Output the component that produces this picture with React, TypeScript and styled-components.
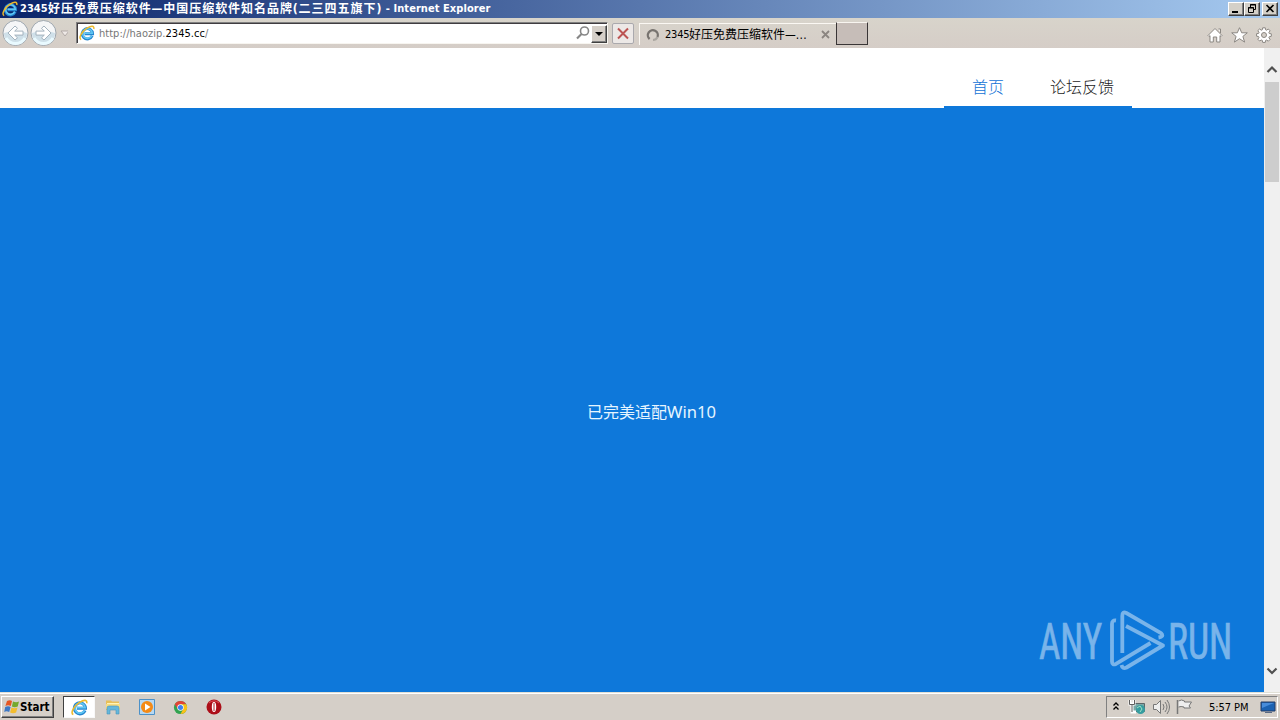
import React from "react";
import styled, { createGlobalStyle, css } from "styled-components";

const GlobalStyle = createGlobalStyle`
  * { box-sizing: border-box; }
  body {
    margin: 0;
    overflow: hidden;
    font-family: "DejaVu Sans Condensed", "DejaVu Sans", "Noto Sans CJK SC", sans-serif;
    font-stretch: condensed;
  }
  svg { display: block; flex: none; }
`;

const Desktop = styled.div`
  width: 1280px;
  height: 720px;
  display: flex;
  flex-direction: column;
  overflow: hidden;
  background: #d5cfc8;
`;

const TitleBar = styled.header`
  height: 18px;
  display: flex;
  align-items: center;
  padding: 0 2px;
  background: linear-gradient(90deg, #0a246a, #a6caf0);
`;

const Title = styled.div`
  display: flex;
  flex: 1;
  align-items: center;
  margin-left: 2px;
  color: #fff;
  font-weight: bold;
  line-height: 18px;
`;

const Run = styled.span<{ $size: number; $gap?: number; $width?: number }>`
  font-size: ${(p) => p.$size}px;
  letter-spacing: ${(p) => p.$gap || 0}px;
  ${(p) => p.$width && css`width: ${p.$width}px;`}
  white-space: pre;
`;

const raised = css`
  border: 1px solid;
  border-color: #fff #404040 #404040 #fff;
  box-shadow: inset -1px -1px 0 #808080;
`;

const WindowButton = styled.button<{ $gap?: number }>`
  width: 16px;
  height: 14px;
  padding: 0;
  margin-left: ${(p) => p.$gap || 0}px;
  background: #d4d0c8;
  ${raised}
`;

const Toolbar = styled.div`
  height: 30px;
  display: flex;
  align-items: flex-start;
  padding-left: 2px;
  background: linear-gradient(#d8d4cb, #d5cdc7);
`;

const AddressBox = styled.div`
  width: 532px;
  height: 22px;
  margin: 4px 0 0 8px;
  display: flex;
  align-items: center;
  padding-left: 2px;
  background: #fff;
  border: 1px solid;
  border-color: #808080 #f7f5f0 #f7f5f0 #808080;
  box-shadow: inset 1px 1px 0 #403c40;
`;

const Url = styled.div`
  flex: 1;
  display: flex;
  margin-left: 4px;
  padding-top: 2px;
  color: #777;
  line-height: 18px;
  b {
    color: #000;
    font-weight: normal;
  }
`;

const DropButton = styled.button`
  width: 16px;
  height: 18px;
  margin: 1px 0 0 1px;
  padding: 0;
  background: #d5cfc8;
  ${raised}
`;

const StopButton = styled.button`
  width: 22px;
  height: 21px;
  margin: 5px 0 0 4px;
  padding: 0 0 0 3px;
  background: #ece8e6;
  border: 1px solid #aaa9ad;
  border-radius: 2px;
`;

const Tab = styled.div`
  width: 197px;
  height: 22px;
  margin: 5px 0 0 5px;
  display: flex;
  align-items: center;
  padding-left: 6px;
  line-height: 20px;
  border-top: 1px solid #fbf8f3;
  border-left: 1px solid #fbf8f3;
`;

const TabTitle = styled.div`
  display: flex;
  align-items: center;
  width: 156px;
  margin-left: 5px;
`;

const NewTab = styled.div`
  width: 32px;
  height: 23px;
  margin-top: 4px;
  background: #c6bdb8;
  border: 1px solid;
  border-color: #f8f5f0 #393536 #393536 #393536;
`;

const ToolIcons = styled.div`
  display: flex;
  gap: 8px;
  margin: 9px 8px 0 auto;
`;

const Viewport = styled.div`
  height: 644px;
  display: flex;
`;

const Page = styled.main`
  width: 1264px;
  display: flex;
  flex-direction: column;
`;

const SiteHeader = styled.div`
  height: 60px;
  padding-right: 132px;
  display: flex;
  justify-content: flex-end;
  background: #fff;
`;

const Nav = styled.nav`
  width: 188px;
  display: flex;
  align-items: center;
  padding: 17px 0 0 28px;
  gap: 46px;
  border-bottom: 2px solid #0e78da;
`;

const NavLink = styled.a<{ $active?: boolean }>`
  color: ${(p) => (p.$active ? "#1272d6" : "#1c1c1c")};
  font-family: "Noto Sans CJK SC", sans-serif;
  font-size: 16px;
  line-height: 20px;
  font-weight: 300;
`;

const Banner = styled.section`
  flex: 1;
  display: flex;
  flex-direction: column;
  align-items: center;
  justify-content: space-between;
  padding: 291px 0 19px 39px;
  background: #0e78da;
`;

const Slogan = styled.div`
  display: flex;
  align-items: center;
  height: 24px;
  color: #e6f5ff;
  font-family: "Noto Sans", "Noto Sans CJK SC", sans-serif;
`;

const Watermark = styled.div`
  align-self: flex-end;
  margin-right: 31px;
`;

const ScrollBar = styled.div`
  width: 16px;
  display: flex;
  flex-direction: column;
  align-items: center;
  padding: 17px 0 16px;
  background: #f0f0f0;
`;

const Thumb = styled.div`
  width: 14px;
  height: 100px;
  margin: 7px 0 auto;
  background: #cdcdcd;
`;

const TaskBar = styled.footer`
  height: 28px;
  display: flex;
  align-items: flex-start;
  padding: 3px 2px 0 1px;
  border-top: 1px solid #e1e0d6;
  box-shadow: inset 0 1px 0 #fff;
  background: #d5cfc8;
`;

const StartButton = styled.button`
  width: 53px;
  height: 22px;
  display: flex;
  align-items: center;
  gap: 0;
  padding: 0 0 0 2px;
  color: #000;
  background: #d5cfc8;
  font-family: inherit;
  font-stretch: condensed;
  font-weight: bold;
  ${raised}
`;

const ActiveTask = styled.div`
  width: 32px;
  height: 22px;
  margin: 0 10px 0 9px;
  display: flex;
  justify-content: center;
  align-items: center;
  background: #fff;
  border: 1px solid;
  border-color: #404040 #f8f8f8 #f8f8f8 #404040;
`;

const Launchers = styled.div`
  height: 22px;
  display: flex;
  align-items: center;
  gap: 18px;
`;

const Tray = styled.div`
  width: 172px;
  height: 22px;
  margin-left: auto;
  display: flex;
  align-items: center;
  padding-left: 5px;
  border: 1px solid;
  border-color: #808080 #fff #fff #808080;
`;

const Clock = styled.div`
  width: 52px;
  margin-left: 15px;
  display: flex;
`;

function IeIcon({ size = 16 }: { size?: number }) {
  return (
    <svg width={size} height={size} viewBox="0 0 16 16" fill="none">
      <path d="M13.2 10.8A5.2 5.2 0 1 1 13.6 8.7H5.5" stroke="#2585cf" strokeWidth="2.9" />
      <path d="M12.8 10.7A4.8 4.8 0 1 1 13.3 8.2H5.5" stroke="#5fc6f3" strokeWidth="1.6" />
      <path d="M2.2 14.6C-1 13.5 2.6 6.5 8 3.2C12.5.4 15.4.6 14.8 4" stroke="#edb92c" strokeWidth="1.5" />
    </svg>
  );
}

function NavArrow({ back }: { back?: boolean }) {
  return (
    <svg width="28" height="30" viewBox="0 0 28 30">
      <circle cx="13.5" cy="15" r="12.5" fill="#f5f6f7" stroke="#9da6ae" />
      <path d="M2 15a11.5 11.5 0 0 0 23 0q-11-4-23 0" fill="#cfe0e9" />
      <path d="M4 20a11 11 0 0 0 19 0" fill="none" stroke="#e9faff" strokeWidth="3" />
      <path
        d={back ? "M6 15l7-7 2.5 2.3-2.8 2.8H21v4h-8.3l2.8 2.7L13 22z" : "M21 15l-7-7-2.5 2.3 2.8 2.8H6v4h8.3l-2.8 2.7L14 22z"}
        fill="#fff"
        stroke="#a4b3be"
      />
    </svg>
  );
}

function AnyRunLogo() {
  return (
    <svg width="196" height="66" viewBox="0 0 196 66" opacity=".6">
      <g fill="#c0dcf5" stroke="#c0dcf5" strokeWidth=".7" fontFamily="Roboto, sans-serif" fontSize="50.5">
        <text transform="translate(2 52) scale(.58 1)" textLength="109" lengthAdjust="spacingAndGlyphs">ANY</text>
        <text transform="translate(131 52) scale(.58 1)" textLength="111" lengthAdjust="spacingAndGlyphs">RUN</text>
      </g>
      <g fill="none" stroke="#c0dcf5" strokeWidth="3.8" strokeLinejoin="round">
        <path d="M79 13.5Q75 13 75 17v37.5q0 4 4 2.4L113.5 36" />
        <path d="M85.3 46V9q0-5 4-3L124 26.2q3.5 3.5-2.5 4.3" />
        <path d="M89 19l37 19.5L89.5 60.5q-4 2-5-2.5" />
      </g>
    </svg>
  );
}

function Chevron({ down }: { down?: boolean }) {
  return (
    <svg width="12" height="10" viewBox="0 0 12 10" fill="none">
      <path d={down ? "M1.5 2.5L6 7l4.5-4.5" : "M1.5 7L6 2.5 10.5 7"} stroke="#505050" strokeWidth="2.2" />
    </svg>
  );
}

function BrowserToolbar() {
  return (
    <Toolbar>
      <NavArrow back />
      <NavArrow />
      <svg width="10" height="30" viewBox="0 0 10 30">
        <path d="M3 13h8l-4 5z" fill="#eee9e6" stroke="#b2aaa7" />
      </svg>
      <AddressBox>
        <IeIcon />
        <Url>
          <Run $size={11} $gap={0.03}>http://haozip.<b>2345.cc</b>/</Run>
        </Url>
        <svg width="14" height="16" viewBox="0 0 14 16" fill="none" stroke="#868686">
          <circle cx="8.5" cy="6" r="4" strokeWidth="1.6" />
          <path d="M5.5 9L1 13.5" strokeWidth="2.2" />
        </svg>
        <DropButton>
          <svg width="14" height="14" viewBox="0 0 14 14"><path d="M3 5h8L7 9z" /></svg>
        </DropButton>
      </AddressBox>
      <StopButton>
        <svg width="14" height="17" viewBox="0 0 14 17">
          <path d="M2 3.5l10 10M12 3.5l-10 10" stroke="#bc5453" strokeWidth="2" />
        </svg>
      </StopButton>
      <Tab>
        <svg width="14" height="14" viewBox="0 0 14 14" fill="none">
          <path d="M3.6 11A5 5 0 1 1 11.5 9" stroke="#77736f" strokeWidth="2.3" />
          <path d="M11.5 9A5 5 0 0 1 7 12" stroke="#aaa6a0" strokeWidth="2" />
        </svg>
        <TabTitle>
          <Run $size={11} $width={24} $gap={-0.2}>2345</Run>
          <Run $size={12}>好压免费压缩软件—</Run>
          <Run $size={12} $gap={0.3}>...</Run>
        </TabTitle>
        <svg width="9" height="9" viewBox="0 0 9 9"><path d="M1 1l7 7M8 1L1 8" stroke="#8b8580" strokeWidth="1.8" /></svg>
      </Tab>
      <NewTab />
      <ToolIcons>
        <svg width="16" height="16" viewBox="0 0 16 16" fill="#fff" stroke="#8b8782">
          <path d="M1 8.5l7-7 7 7-1 1-1-.9V15H9.7v-5H6.3v5H3V8.6l-1 .9zM11.5 2h2v4" />
        </svg>
        <svg width="17" height="16" viewBox="0 0 17 16" fill="#fff" stroke="#8b8782">
          <path d="M8.5.7l2.2 5.1h5.6l-4.4 3.6 1.7 5.7-5.1-3.4-5.1 3.4 1.7-5.7L.7 5.8h5.6z" />
        </svg>
        <svg width="16" height="16" viewBox="0 0 16 16" fill="#fff" stroke="#8b8782">
          <path d="M6.7.8h2.6l.3 2 1 .4 1.7-1.2 1.8 1.8-1.2 1.7.4 1 2 .3v2.5l-2 .4-.4 1 1.2 1.7-1.8 1.8-1.7-1.2-1 .4-.3 2H6.7l-.4-2-1-.4L3.6 14l-1.8-1.8L3 10.6l-.4-1-2-.4V6.7l2-.3.4-1-1.2-1.7L3.6 2l1.7 1.2 1-.4z" />
          <circle cx="8" cy="8" r="2.5" fill="#d5cfc8" />
        </svg>
      </ToolIcons>
    </Toolbar>
  );
}

function Taskbar() {
  return (
    <TaskBar>
      <StartButton>
        <svg width="16" height="16" viewBox="0 0 16 16">
          <path d="M3 2q3-1.5 5 0L6.8 7Q4 5.5 1.4 7z" fill="#e65622" />
          <path d="M9 2.5q3 1.6 6 .1L13.7 7.5q-3 1.4-5.8 0z" fill="#75a92d" />
          <path d="M1.2 8q3-1.5 5.4 0l-1.4 5q-2.8-1.6-5 0z" fill="#3d78c5" />
          <path d="M7.5 8.5q3 1.5 6 0l-1.4 5q-3 1.5-6 0z" fill="#f3bd2f" />
        </svg>
        <Run $size={11.5}>Start</Run>
      </StartButton>
      <ActiveTask><IeIcon size={17} /></ActiveTask>
      <Launchers>
        <svg width="16" height="16" viewBox="0 0 16 16">
          <path d="M1 3V1.5h5l1 1h7V11H1z" fill="#e8bf58" />
          <path d="M2 4h12v7H2z" fill="#fff3b5" />
          <path d="M1 5h14v5H1z" fill="#f6dc83" />
          <path d="M2 15V9q0-2 2-2h8q2 0 2 2v6h-3v-4H5v4z" fill="#64b7db" stroke="#4794bc" strokeWidth=".6" />
        </svg>
        <svg width="16" height="16" viewBox="0 0 16 16">
          <path d="M.5.5h15v15H.5z" fill="#b7d8f2" stroke="#4c91c8" />
          <circle cx="8" cy="8" r="6" fill="#f48a16" />
          <path d="M6 4.5l5.5 3.5L6 11.5z" fill="#fff" />
        </svg>
        <svg width="15" height="15" viewBox="0 0 16 16">
          <circle cx="8" cy="8" r="7" fill="#32a350" />
          <path d="M1.9 4.5A7 7 0 0 1 14.1 4.5H8L5 9.7z" fill="#e34335" />
          <path d="M14.1 4.5A7 7 0 0 1 8 15l3-5.3-3-5.2z" fill="#fbc116" />
          <circle cx="8" cy="8" r="3.4" fill="#fff" />
          <circle cx="8" cy="8" r="2.7" fill="#3c82ef" />
        </svg>
        <svg width="16" height="16" viewBox="0 0 16 16">
          <circle cx="8" cy="8" r="7.5" fill="#ac0e18" />
          <path d="M3 4a7 7 0 0 1 10 0" stroke="#de5158" fill="none" />
          <ellipse cx="8" cy="8" rx="2.2" ry="5" fill="#fff" />
          <path d="M8 4v8" stroke="#b4202a" />
        </svg>
      </Launchers>
      <Tray>
        <svg width="8" height="12" viewBox="0 0 8 12" fill="none" stroke="#000" strokeWidth="1.3">
          <path d="M1.5 4.5L4 2l2.5 2.5M1.5 8.5L4 6l2.5 2.5" />
        </svg>
        <svg width="32" height="16" viewBox="0 0 32 16">
          <path d="M12.5 4.5h12v8h-12z" fill="#79a8a7" stroke="#5c6668" />
          <path d="M10 1v4h4V1M12 5v8h4" fill="none" stroke="#fff" strokeWidth="3" />
          <path d="M9.5 1v4.5h5V1M12 6v7" fill="none" stroke="#5e5e5e" />
          <circle cx="20.5" cy="10.5" r="4.5" fill="#359da0" />
          <path d="M17 9l3-2 2 3-2 3" stroke="#a4e1c5" fill="none" />
        </svg>
        <svg width="18" height="16" viewBox="0 0 18 16" fill="none" stroke="#777">
          <path d="M1.5 5.5h3l4-4v13l-4-4h-3z" fill="#eee" />
          <path d="M11 5q2 3 0 6M13 3q4 5 0 10M15 1q5 7 0 14" />
        </svg>
        <svg width="24" height="16" viewBox="-2 0 24 16" fill="#eee" stroke="#777">
          <path d="M6.5 2q3-2 6 0v1h7l-2.5 4 1.5 2H12V8q-3-1-5.5 0" />
          <path d="M5.5 1v14" strokeWidth="1.5" />
        </svg>
        <Clock><Run $size={11} $gap={-0.05}>5:57 PM</Run></Clock>
        <svg width="17" height="16" viewBox="0 0 17 16">
          <path d="M1 3h14v9H1z" fill="#1b62b2" stroke="#243c66" />
          <path d="M2 4h12L2 9z" fill="#478cda" />
          <path d="M5 13h7v1H5z" fill="#596984" />
        </svg>
      </Tray>
    </TaskBar>
  );
}

export default function App() {
  return (
    <Desktop>
      <GlobalStyle />
      <TitleBar>
        <IeIcon />
        <Title>
          <Run $size={11} $gap={0} $width={28}>2345</Run>
          <Run $size={12} $gap={0.95}>好压免费压缩软件—中国压缩软件知名品牌</Run>
          <Run $size={12} $gap={0.8}>(</Run>
          <Run $size={12} $gap={1}>二三四五旗下</Run>
          <Run $size={12} $gap={0.8}>)</Run>
          <Run $size={11} $gap={0.06}> - Internet Explorer</Run>
        </Title>
        <WindowButton>
          <svg width="14" height="12" viewBox="0 0 14 12"><path d="M3 8h6v2H3z" /></svg>
        </WindowButton>
        <WindowButton>
          <svg width="14" height="12" viewBox="0 0 14 12" fill="none" stroke="#000">
            <path d="M5.5 4V1.5h5v5H9M5 2h6M3.5 4.5h5v5h-5zM3 5h6" />
          </svg>
        </WindowButton>
        <WindowButton $gap={2}>
          <svg width="14" height="12" viewBox="0 0 14 12"><path d="M3.5 2l7 7M10.5 2l-7 7" stroke="#000" strokeWidth="1.6" /></svg>
        </WindowButton>
      </TitleBar>
      <BrowserToolbar />
      <Viewport>
        <Page>
          <SiteHeader>
            <Nav>
              <NavLink $active>首页</NavLink>
              <NavLink>论坛反馈</NavLink>
            </Nav>
          </SiteHeader>
          <Banner>
            <Slogan>
              <Run $size={16}>已完美适配</Run>
              <Run $size={16.6}>Win10</Run>
            </Slogan>
            <Watermark><AnyRunLogo /></Watermark>
          </Banner>
        </Page>
        <ScrollBar>
          <Chevron />
          <Thumb />
          <Chevron down />
        </ScrollBar>
      </Viewport>
      <Taskbar />
    </Desktop>
  );
}
